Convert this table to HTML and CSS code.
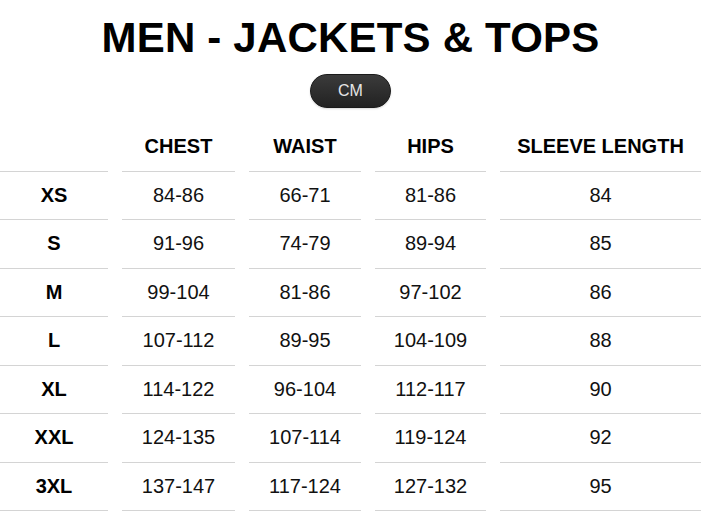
FILE: index.html
```html
<!DOCTYPE html>
<html lang="en">
<head>
<meta charset="utf-8">
<title>Men - Jackets &amp; Tops</title>
<link rel="stylesheet" href="styles.css">
</head>
<body>
<main class="page">
  <h1 class="title">MEN - JACKETS &amp; TOPS</h1>
  <div class="unit-row"><button class="unit-btn" type="button">CM</button></div>
  <div class="size-table">
    <div class="cell head"></div>
    <div class="cell head">CHEST</div>
    <div class="cell head">WAIST</div>
    <div class="cell head">HIPS</div>
    <div class="cell head">SLEEVE LENGTH</div>

    <div class="cell label">XS</div><div class="cell">84-86</div><div class="cell">66-71</div><div class="cell">81-86</div><div class="cell">84</div>
    <div class="cell label">S</div><div class="cell">91-96</div><div class="cell">74-79</div><div class="cell">89-94</div><div class="cell">85</div>
    <div class="cell label">M</div><div class="cell">99-104</div><div class="cell">81-86</div><div class="cell">97-102</div><div class="cell">86</div>
    <div class="cell label">L</div><div class="cell">107-112</div><div class="cell">89-95</div><div class="cell">104-109</div><div class="cell">88</div>
    <div class="cell label">XL</div><div class="cell">114-122</div><div class="cell">96-104</div><div class="cell">112-117</div><div class="cell">90</div>
    <div class="cell label">XXL</div><div class="cell">124-135</div><div class="cell">107-114</div><div class="cell">119-124</div><div class="cell">92</div>
    <div class="cell label">3XL</div><div class="cell">137-147</div><div class="cell">117-124</div><div class="cell">127-132</div><div class="cell">95</div>
  </div>
</main>
</body>
</html>
```

FILE: styles.css
```css
html, body {
  margin: 0;
  padding: 0;
  background: #ffffff;
}

body {
  font-family: "Liberation Sans", Arial, Helvetica, sans-serif;
  color: #111111;
  overflow: hidden;
}

.page {
  width: 701px;
  padding-top: 14px;
}

.title {
  margin: 0;
  font-size: 42px;
  font-weight: 700;
  line-height: 48px;
  text-align: center;
  color: #000000;
  letter-spacing: 0.2px;
}

.unit-row {
  display: flex;
  justify-content: center;
  margin-top: 12px;
}

.unit-btn {
  width: 81px;
  height: 34px;
  border-radius: 17px;
  border: 1px solid #1a1a1a;
  background: linear-gradient(#3b3b3b, #222222);
  color: #e6e6e6;
  font-family: "Liberation Sans", Arial, sans-serif;
  font-size: 16px;
  padding: 0;
  box-shadow: 0 1px 2px rgba(0, 0, 0, 0.15);
}

.size-table {
  display: grid;
  grid-template-columns: 108px 113px 112px 111px 1fr;
  column-gap: 14px;
  grid-auto-rows: 48.5px;
  margin-top: 15px;
}

.cell {
  display: flex;
  align-items: center;
  justify-content: center;
  border-bottom: 1px solid #d4d4d4;
  font-size: 20px;
  color: #111111;
  white-space: nowrap;
}

.head,
.label {
  font-weight: 700;
  color: #000000;
}
```
